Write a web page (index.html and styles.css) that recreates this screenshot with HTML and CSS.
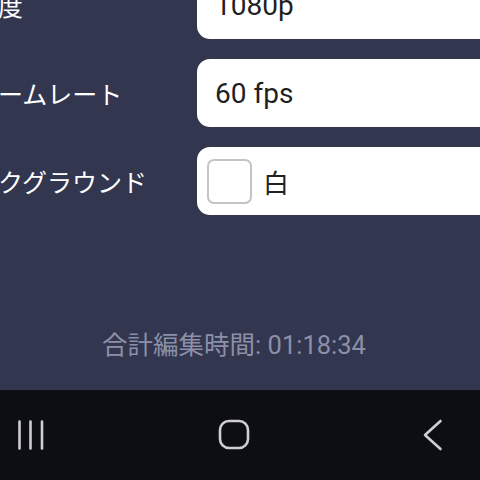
FILE: index.html
```html
<!DOCTYPE html>
<html lang="ja">
<head>
<meta charset="utf-8">
<link rel="stylesheet" href="styles.css">
</head>
<body>
<div class="screen">
  <main class="content">
    <div class="settings">
      <div class="row">
        <div class="label">解像度</div>
        <div class="field"><span class="value">1080p</span></div>
      </div>
      <div class="row">
        <div class="label">フレームレート</div>
        <div class="field"><span class="value">60 fps</span></div>
      </div>
      <div class="row">
        <div class="label">バックグラウンド</div>
        <div class="field field-color">
          <span class="swatch"></span>
          <span class="value value-color">白</span>
        </div>
      </div>
    </div>
    <div class="total">合計編集時間: 01:18:34</div>
  </main>
  <nav class="navbar">
    <svg class="icon" width="28" height="30" viewBox="0 0 28 30">
      <line x1="2.5" y1="1.5" x2="2.5" y2="28.5"/>
      <line x1="13.5" y1="1.5" x2="13.5" y2="28.5"/>
      <line x1="25" y1="1.5" x2="25" y2="28.5"/>
    </svg>
    <svg class="icon" width="32" height="32" viewBox="0 0 32 32">
      <rect x="2" y="2" width="28" height="27" rx="9"/>
    </svg>
    <svg class="icon" width="20" height="32" viewBox="0 0 20 32">
      <polyline points="17.5,2 2,16 17.5,30"/>
    </svg>
  </nav>
</div>
</body>
</html>
```

FILE: styles.css
```css
html, body {
  margin: 0;
  padding: 0;
}

body {
  width: 480px;
  height: 480px;
  overflow: hidden;
  background: #32364f;
  font-family: Roboto, "Noto Sans CJK JP", sans-serif;
}

.screen {
  width: 480px;
  height: 480px;
  display: flex;
  flex-direction: column;
}

.content {
  height: 390px;
  display: flex;
  flex-direction: column;
  background: #32364f;
}

.settings {
  margin-top: -29px;
  margin-left: -52px;
  width: 620px;
  display: flex;
  flex-direction: column;
  gap: 20px;
}

.row {
  display: grid;
  grid-template-columns: 249px 371px;
  align-items: center;
}

.label {
  color: #ffffff;
  font-size: 25px;
  white-space: nowrap;
  font-family: "Noto Sans CJK JP", sans-serif;
}

.field {
  height: 68px;
  background: #ffffff;
  border-radius: 13px;
  display: flex;
  align-items: center;
  padding-left: 18px;
}

.value {
  font-size: 28px;
  color: #1f1f1f;
}

.field-color {
  padding-left: 10px;
  gap: 11px;
}

.swatch {
  width: 41px;
  height: 41px;
  border: 2px solid #c4c4c4;
  border-radius: 7px;
  background: #ffffff;
  box-sizing: content-box;
}

.value-color {
  font-size: 26px;
  font-family: "Noto Sans CJK JP", sans-serif;
  color: #222222;
}

.total {
  margin-top: auto;
  margin-bottom: 30px;
  margin-right: 12px;
  text-align: center;
  color: #8c90a7;
  font-size: 25.5px;
  line-height: 30px;
}

.navbar {
  flex: 1;
  background: #0d0e13;
  display: flex;
  align-items: center;
  justify-content: space-between;
  padding: 0 37px 0 17px;
}

.icon {
  fill: none;
  stroke: #cfcfd2;
  stroke-width: 2.6;
  stroke-linecap: round;
  stroke-linejoin: round;
}
```
